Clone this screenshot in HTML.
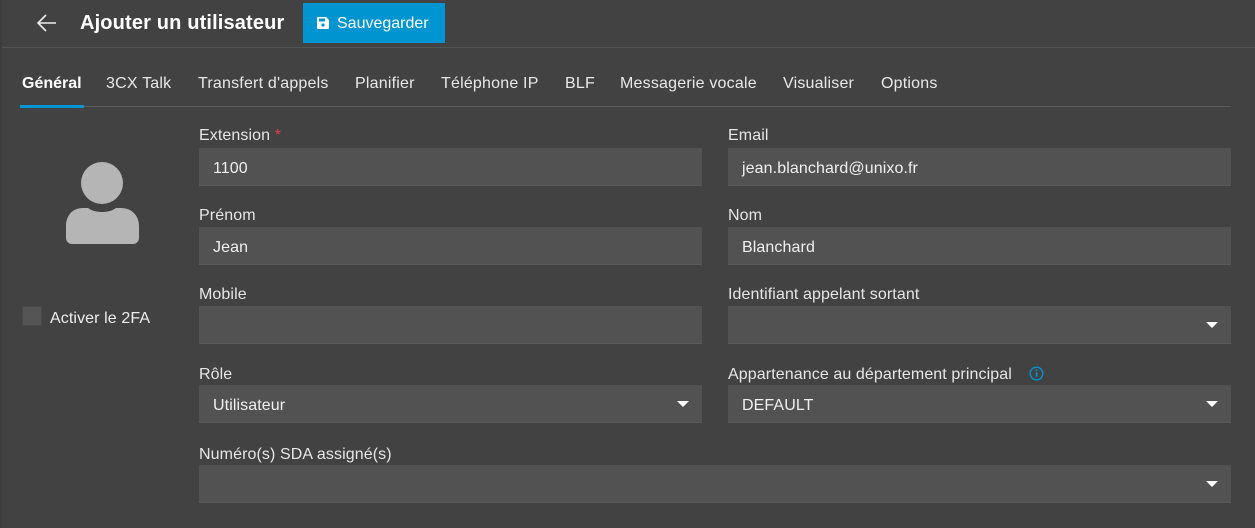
<!DOCTYPE html>
<html><head><meta charset="utf-8"><style>
*{margin:0;padding:0;box-sizing:border-box}
body{width:1255px;height:528px;background:#424242;font-family:"Liberation Sans",sans-serif;color:#eee;position:relative;overflow:hidden}
.a{position:absolute}
.lbl{position:absolute;font-size:16px;color:#e6e6e6;line-height:18px;letter-spacing:0.1px}
.in{position:absolute;height:38px;background:#525252;border-bottom:1px solid #5a5a5a;font-size:16px;color:#f0f0f0;line-height:41px;padding-left:14px;letter-spacing:0.1px}
.tri{position:absolute;right:13px;top:16px;width:0;height:0;border-left:6px solid transparent;border-right:6px solid transparent;border-top:6px solid #fff}
.tab{position:absolute;top:75px;font-size:16px;color:#e8e8e8;letter-spacing:0.2px}
</style></head><body>
<div class="a" style="left:0;top:47px;width:1255px;height:1px;background:#555"></div>
<div class="a" style="left:0;top:0;width:2px;height:528px;background:#3c3c3c"></div>
<svg class="a" style="left:36px;top:13px" width="22" height="20" viewBox="0 0 22 20"><path d="M20 10H2M10 2L2 10L10 18" stroke="#eee" stroke-width="1.6" fill="none"/></svg>
<div class="a" style="left:80px;top:12px;font-size:20px;font-weight:bold;color:#fff;letter-spacing:0.15px">Ajouter un utilisateur</div>
<div class="a" style="left:303px;top:3px;width:142px;height:40px;background:#0094d0"></div>
<svg class="a" style="left:317px;top:17px" width="12" height="12" viewBox="0 0 12 12"><path d="M0 1a1 1 0 011-1h8l3 3v8a1 1 0 01-1 1H1a1 1 0 01-1-1z" fill="#fff"/><rect x="2" y="1.5" width="6" height="3" fill="#0094d0"/><circle cx="6" cy="8" r="1.6" fill="#0094d0"/></svg>
<div class="a" style="left:337px;top:15px;font-size:16px;color:#fff">Sauvegarder</div>
<div class="tab" style="left:22px;font-weight:bold;color:#fff;letter-spacing:0">Général</div>
<div class="tab" style="left:106px">3CX Talk</div>
<div class="tab" style="left:198px">Transfert d'appels</div>
<div class="tab" style="left:355px">Planifier</div>
<div class="tab" style="left:441px">Téléphone IP</div>
<div class="tab" style="left:565px">BLF</div>
<div class="tab" style="left:620px">Messagerie vocale</div>
<div class="tab" style="left:783px">Visualiser</div>
<div class="tab" style="left:881px">Options</div>
<div class="a" style="left:20px;top:106px;width:1211px;height:1px;background:#5a5a5a"></div>
<div class="a" style="left:20px;top:105px;width:64px;height:3px;background:#0094d0"></div>
<svg class="a" style="left:66px;top:162px" width="73" height="84" viewBox="0 0 73 84"><circle cx="36" cy="21" r="21" fill="#b5b5b5"/><path d="M0 76V64C0 53 7 46 17 46h5c4 3 9 4 14 4s10-1 14-4h5c10 0 18 7 18 18v12a6 6 0 01-6 6H6a6 6 0 01-6-6z" fill="#b5b5b5"/></svg>
<div class="a" style="left:22px;top:306px;width:20px;height:20px;background:#555;border:1px solid #4a4a4a"></div>
<div class="a" style="left:50px;top:310px;font-size:16px;color:#eee;letter-spacing:0.1px">Activer le 2FA</div>
<div class="lbl" style="left:199px;top:127px">Extension <span style="color:#e0404a">*</span></div>
<div class="in" style="left:199px;top:148px;width:503px">1100</div>
<div class="lbl" style="left:728px;top:127px">Email</div>
<div class="in" style="left:728px;top:148px;width:503px">jean.blanchard@unixo.fr</div>
<div class="lbl" style="left:199px;top:207px">Prénom</div>
<div class="in" style="left:199px;top:227px;width:503px">Jean</div>
<div class="lbl" style="left:728px;top:207px">Nom</div>
<div class="in" style="left:728px;top:227px;width:503px">Blanchard</div>
<div class="lbl" style="left:199px;top:286px">Mobile</div>
<div class="in" style="left:199px;top:306px;width:503px"></div>
<div class="lbl" style="left:728px;top:286px">Identifiant appelant sortant</div>
<div class="in" style="left:728px;top:306px;width:503px"><div class="tri"></div></div>
<div class="lbl" style="left:199px;top:366px">Rôle</div>
<div class="in" style="left:199px;top:385px;width:503px">Utilisateur<div class="tri"></div></div>
<div class="lbl" style="left:728px;top:366px">Appartenance au département principal</div>
<svg class="a" style="left:1029px;top:366px" width="15" height="15" viewBox="0 0 15 15"><circle cx="7.5" cy="7.5" r="6.3" stroke="#0094d0" stroke-width="1.4" fill="none"/><rect x="6.7" y="6.3" width="1.7" height="4.5" fill="#0094d0"/><circle cx="7.5" cy="4.3" r="1" fill="#0094d0"/></svg>
<div class="in" style="left:728px;top:385px;width:503px">DEFAULT<div class="tri"></div></div>
<div class="lbl" style="left:199px;top:446px">Numéro(s) SDA assigné(s)</div>
<div class="in" style="left:199px;top:465px;width:1032px"><div class="tri"></div></div>
</body></html>
